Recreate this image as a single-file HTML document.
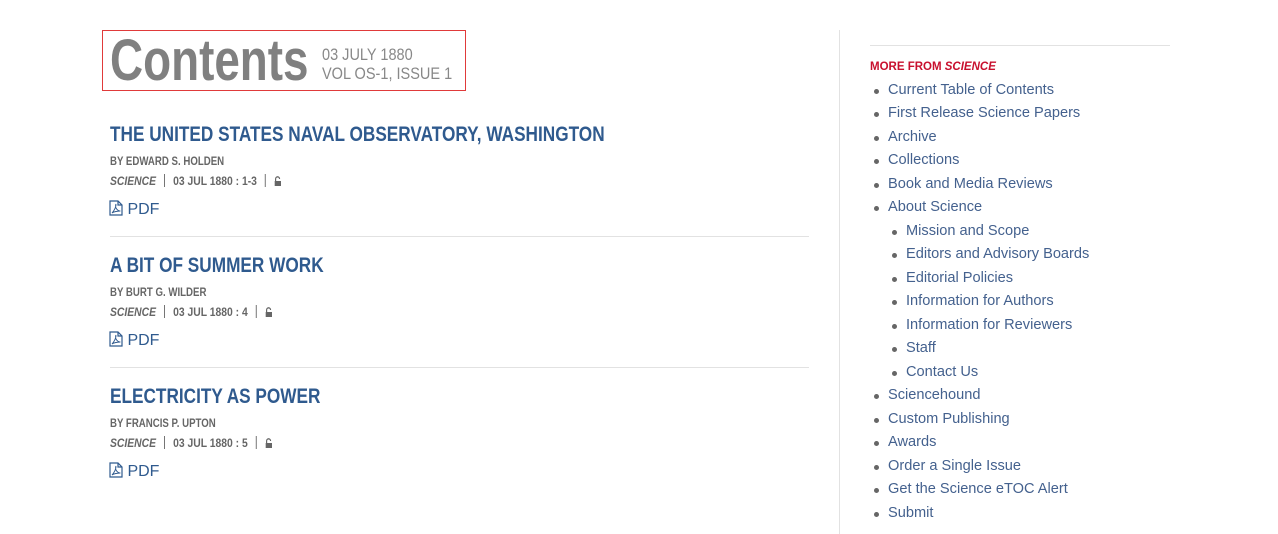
<!DOCTYPE html>
<html><head><meta charset="utf-8"><style>
body{margin:0;width:1278px;height:534px;background:#fff;font-family:"Liberation Sans",sans-serif;position:relative;overflow:hidden}
.a{position:absolute;white-space:nowrap}
.box{position:absolute;left:102px;top:30px;width:362px;height:59px;border:1px solid #e03a3a}
.big{left:110px;top:28px;font-size:58px;font-weight:bold;color:#808080;line-height:66px;transform:scaleX(.79);transform-origin:left}
.date{left:322px;font-size:16.5px;color:#888;line-height:19px;transform:scaleX(.88);transform-origin:left}
.t{left:110px;font-size:21px;font-weight:bold;color:#2f5a8e;transform:scaleX(.82);transform-origin:left}
.by{left:110px;font-size:11.5px;font-weight:bold;color:#666;transform:scaleX(.84);transform-origin:left}
.meta{left:110px;font-size:11.5px;font-weight:bold;color:#666;transform:scaleX(.9);transform-origin:left}
.meta i{font-style:italic}
.sep{display:inline-block;width:1px;height:13px;background:#666;vertical-align:-2px;margin:0 9px}
.pdf{left:109px;font-size:16px;color:#2f5a8e}
.hr{position:absolute;left:110px;width:699px;height:1px;background:#e2e2e2}
.vr{position:absolute;left:839px;top:30px;width:1px;height:504px;background:#e2e2e2}
.side{position:absolute;left:870px;top:45px;width:300px;border-top:1px solid #e2e2e2}
.more{position:absolute;left:870px;top:61px;font-size:11.5px;font-weight:bold;color:#c8102e}
ul{margin:0;padding:0;list-style:none}
li{position:absolute;font-size:14.6px;color:#44618e;white-space:nowrap;margin-top:1px}
li:before{content:"";position:absolute;left:-14px;top:7px;width:5px;height:5px;border-radius:50%;background:#666}
</style></head><body>
<div class="box"></div>
<div class="a big">Contents</div>
<div class="a date" style="top:46px">03 JULY 1880</div>
<div class="a date" style="top:65px">VOL OS-1, ISSUE 1</div>

<div class="a t" style="top:123px">THE UNITED STATES NAVAL OBSERVATORY, WASHINGTON</div>
<div class="a by" style="top:156px">BY EDWARD S. HOLDEN</div>
<div class="a meta" style="top:174px"><i>SCIENCE</i><span class="sep"></span>03 JUL 1880 : 1-3<span class="sep"></span><svg width="9" height="10" viewBox="0 0 9 10" style="vertical-align:-1px"><path d="M2 5V3a2.2 2.2 0 0 1 4.4 0" fill="none" stroke="#666" stroke-width="1.3"/><rect x="1" y="5" width="7" height="5" fill="#666"/></svg></div>
<div class="a pdf" style="top:200px"><svg width="14" height="16" viewBox="0 0 14 16" style="vertical-align:-2px"><path d="M1 1h8l4 4v10H1z M9 1v4h4" fill="none" stroke="#2f5a8e" stroke-width="1.2"/><path d="M3 13c2-2 4-6 4-8s-1 1 0 3 3 3 4 3-5 0-8 2" fill="none" stroke="#2f5a8e" stroke-width=".9"/></svg> PDF</div>
<div class="hr" style="top:236px"></div>

<div class="a t" style="top:254px">A BIT OF SUMMER WORK</div>
<div class="a by" style="top:287px">BY BURT G. WILDER</div>
<div class="a meta" style="top:305px"><i>SCIENCE</i><span class="sep"></span>03 JUL 1880 : 4<span class="sep"></span><svg width="9" height="10" viewBox="0 0 9 10" style="vertical-align:-1px"><path d="M2 5V3a2.2 2.2 0 0 1 4.4 0" fill="none" stroke="#666" stroke-width="1.3"/><rect x="1" y="5" width="7" height="5" fill="#666"/></svg></div>
<div class="a pdf" style="top:331px"><svg width="14" height="16" viewBox="0 0 14 16" style="vertical-align:-2px"><path d="M1 1h8l4 4v10H1z M9 1v4h4" fill="none" stroke="#2f5a8e" stroke-width="1.2"/><path d="M3 13c2-2 4-6 4-8s-1 1 0 3 3 3 4 3-5 0-8 2" fill="none" stroke="#2f5a8e" stroke-width=".9"/></svg> PDF</div>
<div class="hr" style="top:367px"></div>

<div class="a t" style="top:385px">ELECTRICITY AS POWER</div>
<div class="a by" style="top:418px">BY FRANCIS P. UPTON</div>
<div class="a meta" style="top:436px"><i>SCIENCE</i><span class="sep"></span>03 JUL 1880 : 5<span class="sep"></span><svg width="9" height="10" viewBox="0 0 9 10" style="vertical-align:-1px"><path d="M2 5V3a2.2 2.2 0 0 1 4.4 0" fill="none" stroke="#666" stroke-width="1.3"/><rect x="1" y="5" width="7" height="5" fill="#666"/></svg></div>
<div class="a pdf" style="top:462px"><svg width="14" height="16" viewBox="0 0 14 16" style="vertical-align:-2px"><path d="M1 1h8l4 4v10H1z M9 1v4h4" fill="none" stroke="#2f5a8e" stroke-width="1.2"/><path d="M3 13c2-2 4-6 4-8s-1 1 0 3 3 3 4 3-5 0-8 2" fill="none" stroke="#2f5a8e" stroke-width=".9"/></svg> PDF</div>

<div class="vr"></div>
<div class="side"></div>
<div class="more">MORE FROM <i>SCIENCE</i></div>
<ul>
<li style="left:888px;top:81px">Current Table of Contents</li>
<li style="left:888px;top:104px">First Release Science Papers</li>
<li style="left:888px;top:128px">Archive</li>
<li style="left:888px;top:151px">Collections</li>
<li style="left:888px;top:175px">Book and Media Reviews</li>
<li style="left:888px;top:198px">About Science</li>
<li style="left:906px;top:222px">Mission and Scope</li>
<li style="left:906px;top:245px">Editors and Advisory Boards</li>
<li style="left:906px;top:269px">Editorial Policies</li>
<li style="left:906px;top:292px">Information for Authors</li>
<li style="left:906px;top:316px">Information for Reviewers</li>
<li style="left:906px;top:339px">Staff</li>
<li style="left:906px;top:363px">Contact Us</li>
<li style="left:888px;top:386px">Sciencehound</li>
<li style="left:888px;top:410px">Custom Publishing</li>
<li style="left:888px;top:433px">Awards</li>
<li style="left:888px;top:457px">Order a Single Issue</li>
<li style="left:888px;top:480px">Get the Science eTOC Alert</li>
<li style="left:888px;top:504px">Submit</li>
</ul>
</body></html>
